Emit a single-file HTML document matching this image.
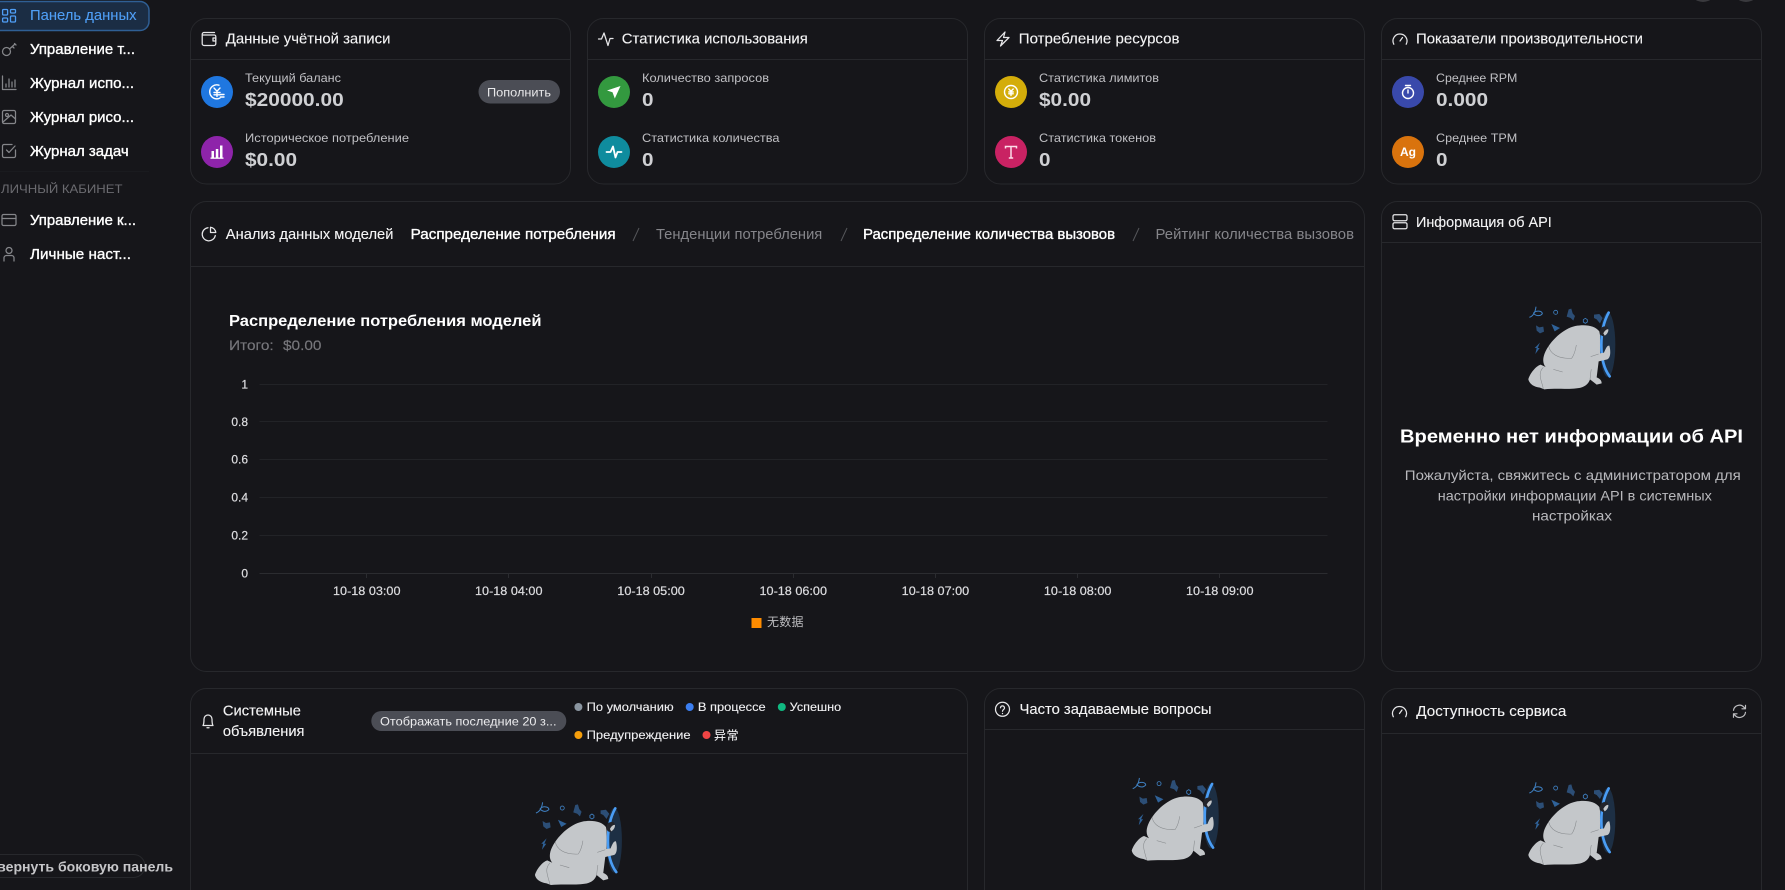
<!DOCTYPE html>
<html lang="ru">
<head>
<meta charset="utf-8">
<title>Панель данных</title>
<style>
html,body{margin:0;padding:0;background:#16161a;width:1785px;height:890px;overflow:hidden}
svg{display:block;position:absolute;left:0;top:0}
text{font-family:"Liberation Sans","Noto Sans CJK SC",sans-serif;}
.card{fill:#16161a;stroke:#27282c;stroke-width:1}
.ln{stroke:#27282c;stroke-width:1}
.nav{font-size:14.5px;fill:#fff;stroke:#fff;stroke-width:.35}
.h{font-size:14.5px;fill:#f4f4f5;stroke:#f4f4f5;stroke-width:.12}
.lb{font-size:12px;fill:#c0c0c4}
.v{font-size:18.5px;font-weight:700;fill:#cfd0d3}
.ic{fill:none;stroke:#e6e6e8;stroke-width:1.25;stroke-linecap:round;stroke-linejoin:round}
.si{fill:none;stroke:#85868a;stroke-width:1.25;stroke-linecap:round;stroke-linejoin:round}
.w{fill:none;stroke:#fff;stroke-width:1.4;stroke-linecap:round;stroke-linejoin:round}
.tb{font-size:14.5px;fill:#fff;stroke:#fff;stroke-width:.35}
.tg{font-size:14.5px;fill:#85858a}
.gr{stroke:#222327;stroke-width:1}
.ax{font-size:12px;fill:#dcdcdf;stroke:#dcdcdf;stroke-width:.2}
.lg{font-size:12px;fill:#f0f0f2;stroke:#f0f0f2;stroke-width:.1}
.b{font-size:14px;fill:#b9b9bd}
</style>
</head>
<body>
<svg width="1785" height="890" viewBox="0 0 1785 890" xmlns="http://www.w3.org/2000/svg">
<defs>
<g id="mascot">
  <ellipse cx="323" cy="164" rx="23" ry="97" fill="#1d2f44"/>
  <path d="M326 68C311 95 304 130 304 165C304 205 313 238 329 259" fill="none" stroke="#4a9df5" stroke-width="8" stroke-linecap="round"/>
  <path d="M88 82C100 78 106 66 108 50M100 70C108 60 126 62 127 71C120 80 108 78 100 70" fill="none" stroke="#3f80c2" stroke-width="3"/>
  <circle cx="167" cy="67" r="6" fill="none" stroke="#3f80c2" stroke-width="2.5"/>
  <path d="M206 58L214 56L218 70L225 78L220 92L212 84L200 80Z" fill="#2c4e76"/>
  <path d="M256 85L262 89V96L256 100L250 96V89Z" fill="none" stroke="#3f80c2" stroke-width="2.5"/>
  <path d="M282 74L298 72L308 84L300 100L290 88L282 84Z" fill="#2c4e76"/>
  <path d="M108 106L118 112L130 110L132 125L120 130L110 122Z" fill="#2c4e76"/>
  <path d="M154 102L180 114L164 124Z" fill="#2f6299"/>
  <path d="M120 158L113 174L119 174L106 192L110 174L104 174Z" fill="#2f6299"/>
  <path d="M298 124C286 108 258 102 226 108C190 116 150 152 134 190C127 208 129 222 137 231L122 224C108 228 90 250 85 268C88 280 98 290 120 293L133 298C170 294 220 300 245 292C258 288 266 280 270 268L290 284L305 280C305 270 298 265 290 262L296 214L322 208C333 204 332 180 328 167C320 165 316 180 312 188L300 190L300 135Z" fill="#c4c7ca"/>
  <path d="M300 128C298 114 308 106 322 110C328 118 324 132 314 138C306 140 302 136 300 128Z" fill="#23242a"/>
  <path d="M310 130C314 122 320 116 325 118C326 126 320 134 314 137Z" fill="#c4c7ca"/>
  <path d="M146 168C150 190 172 207 215 205M229 165C226 185 220 198 215 205M272 200L296 192M160 238L188 246M270 268C272 255 272 245 274 238M130 296C124 270 112 250 130 232" fill="none" stroke="#85888b" stroke-width="1.6"/>
</g>
<g id="gauge"><path d="M-6.2 4.2A7 7 0 1 1 6.2 4.2" class="ic"/><path d="M0 1L2.5-2.5" class="ic"/></g>
</defs>

<rect width="1785" height="890" fill="#16161a"/>

<!-- top-right buttons -->
<circle cx="1703" cy="-12" r="14" fill="#3a3a3e"/>
<circle cx="1746" cy="-12" r="14" fill="#3a3a3e"/>

<!-- Sidebar -->
<rect x="-10" y="1.5" width="159" height="29" rx="9" fill="#1b2d44" stroke="#2f5f94" stroke-width="1.5"/>
<g fill="none" stroke="#4f9ef5" stroke-width="1.3">
  <rect x="2.6" y="9.5" width="5" height="5.5" rx="1"/><rect x="10.5" y="9.5" width="5" height="3.5" rx="1"/>
  <rect x="2.6" y="18" width="5" height="4" rx="1"/><rect x="10.5" y="16" width="5" height="6" rx="1"/>
</g>
<text x="30" y="20" class="nav" style="fill:#4f9ef5;stroke:#4f9ef5;stroke-width:.1" textLength="106.5" lengthAdjust="spacingAndGlyphs">Панель данных</text>

<g class="si" transform="translate(9,49)"><circle cx="-2.5" cy="2.5" r="4"/><path d="M0.5 0L6-5M3.5-2.5L5-1M5.5-5.5L7-4"/></g>
<text x="30" y="54" class="nav" textLength="105" lengthAdjust="spacingAndGlyphs">Управление т...</text>

<g class="si" transform="translate(9,83)"><path d="M-6.5-7V6.5H7M-3 4V1M0 4V-4M3 4V-1M6 4V-3"/></g>
<text x="30" y="88" class="nav" textLength="104" lengthAdjust="spacingAndGlyphs">Журнал испо...</text>

<g class="si" transform="translate(9,117)"><rect x="-6.5" y="-6.5" width="13" height="13" rx="1.5"/><circle cx="-2" cy="-2" r="1.5"/><path d="M-6 5L2-2L6.5 2"/></g>
<text x="30" y="122" class="nav" textLength="104" lengthAdjust="spacingAndGlyphs">Журнал рисо...</text>

<g class="si" transform="translate(9,151)"><path d="M6.5-1V5A1.5 1.5 0 0 1 5 6.5H-5A1.5 1.5 0 0 1-6.5 5V-5A1.5 1.5 0 0 1-5-6.5H3M-2.5-1L0 1.5L6-5"/></g>
<text x="30" y="156" class="nav" textLength="98.7" lengthAdjust="spacingAndGlyphs">Журнал задач</text>

<line x1="0" y1="171.5" x2="149" y2="171.5" stroke="#1a1b1f"/>
<text x="1" y="193" font-size="12" fill="#6b6b70" textLength="121.5" lengthAdjust="spacingAndGlyphs">ЛИЧНЫЙ КАБИНЕТ</text>

<g class="si" transform="translate(9,220)"><rect x="-7" y="-5.5" width="14" height="11" rx="1.5"/><path d="M-7-1.5H7"/></g>
<text x="30" y="225" class="nav" textLength="106" lengthAdjust="spacingAndGlyphs">Управление к...</text>

<g class="si" transform="translate(9,254)"><circle cx="0" cy="-3.5" r="3"/><path d="M-5 7V4A2.5 2.5 0 0 1-2.5 1.5H2.5A2.5 2.5 0 0 1 5 4V7"/></g>
<text x="30" y="259" class="nav" textLength="101" lengthAdjust="spacingAndGlyphs">Личные наст...</text>

<path d="M0 854.5H133.5A11.5 11.5 0 0 1 133.5 877.5H0" fill="none" stroke="#27282c"/>
<text x="-13" y="871.5" font-size="14" font-weight="700" fill="#c6c6c9" textLength="186" lengthAdjust="spacingAndGlyphs">Свернуть боковую панель</text>

<!-- Card 1 -->
<rect class="card" x="190.5" y="18.5" width="380" height="165.5" rx="16"/>
<line class="ln" x1="190.5" y1="59.5" x2="570.5" y2="59.5"/>
<g class="ic" transform="translate(209,39)"><path d="M5.5-6.5H-5A1.8 1.8 0 0 0-6.8-4.7V4.7A1.8 1.8 0 0 0-5 6.5H5A1.8 1.8 0 0 0 6.8 4.7V-2.5A1.5 1.5 0 0 0 5-4H-6"/><path d="M4-1H6.8V2H4Z"/></g>
<text x="225.8" y="43.5" class="h" textLength="164.6" lengthAdjust="spacingAndGlyphs">Данные учётной записи</text>

<circle cx="217" cy="92" r="16" fill="#1f77e0"/>
<g class="w" transform="translate(217,92)"><path d="M2-6.8A7 7 0 1 0 3 6"/><path d="M-3-4L0-.8L3-4M0-.8V4.5M-3 .5H3M-3 2.8H3M3.5 2.5H7M3.5 5H7"/></g>
<text x="245" y="82" class="lb" textLength="96" lengthAdjust="spacingAndGlyphs">Текущий баланс</text>
<text x="245" y="106" class="v" textLength="98.7" lengthAdjust="spacingAndGlyphs">$20000.00</text>
<rect x="478.5" y="80" width="81.5" height="23.5" rx="11.7" fill="#4b4d55"/>
<text x="487" y="96.3" font-size="12" fill="#e8e8ea" textLength="64" lengthAdjust="spacingAndGlyphs">Пополнить</text>

<circle cx="217" cy="152" r="16" fill="#8e24aa"/>
<g transform="translate(217,152)" fill="#fff"><rect x="-5.5" y="-1" width="2.5" height="6.5"/><rect x="-1.2" y="-3" width="2.5" height="8.5"/><rect x="3" y="-6.5" width="2.5" height="12"/><rect x="-6.5" y="5.5" width="13" height="1.3"/></g>
<text x="245" y="142" class="lb" textLength="164" lengthAdjust="spacingAndGlyphs">Историческое потребление</text>
<text x="245" y="166" class="v" textLength="52" lengthAdjust="spacingAndGlyphs">$0.00</text>

<!-- Card 2 -->
<rect class="card" x="587.5" y="18.5" width="380" height="165.5" rx="16"/>
<line class="ln" x1="587.5" y1="59.5" x2="967.5" y2="59.5"/>
<path class="ic" transform="translate(606,39)" d="M-7.5 0H-4.5L-2-6L2 6.5L4-.5H7"/>
<text x="621.8" y="43.5" class="h" textLength="186" lengthAdjust="spacingAndGlyphs">Статистика использования</text>

<circle cx="614" cy="92" r="16" fill="#33993f"/>
<path transform="translate(614,92)" d="M6.5-6L-7-1.5L-1.5.3L.8 6.5Z" fill="#fff"/>
<text x="642" y="82" class="lb" textLength="127" lengthAdjust="spacingAndGlyphs">Количество запросов</text>
<text x="642" y="106" class="v" textLength="11.5" lengthAdjust="spacingAndGlyphs">0</text>

<circle cx="614" cy="152" r="16" fill="#0f8c9e"/>
<path transform="translate(614,152)" d="M-7.5 0H-3.5L-1-5.5L1.5 5.5L3.5 0H7.5" fill="none" stroke="#fff" stroke-width="1.8" stroke-linecap="round" stroke-linejoin="round"/>
<text x="642" y="142" class="lb" textLength="137.5" lengthAdjust="spacingAndGlyphs">Статистика количества</text>
<text x="642" y="166" class="v" textLength="11.5" lengthAdjust="spacingAndGlyphs">0</text>

<!-- Card 3 -->
<rect class="card" x="984.5" y="18.5" width="380" height="165.5" rx="16"/>
<line class="ln" x1="984.5" y1="59.5" x2="1364.5" y2="59.5"/>
<path class="ic" transform="translate(1003,39)" d="M2-7L-6 1.5H-.5L-2.5 7L6-1.5H.5Z"/>
<text x="1018.8" y="43.5" class="h" textLength="160.7" lengthAdjust="spacingAndGlyphs">Потребление ресурсов</text>

<circle cx="1011" cy="92" r="16" fill="#d4ad0a"/>
<g class="w" transform="translate(1011,92)"><circle r="6.5"/><path d="M-2.2-3L0-.8L2.2-3M0-.8V3.5M-2.2 0H2.2M-2.2 1.8H2.2"/></g>
<text x="1039" y="82" class="lb" textLength="120" lengthAdjust="spacingAndGlyphs">Статистика лимитов</text>
<text x="1039" y="106" class="v" textLength="52" lengthAdjust="spacingAndGlyphs">$0.00</text>

<circle cx="1011" cy="152" r="16" fill="#c92263"/>
<path transform="translate(1011,152)" d="M-5.5-3.5V-5.5H5.5V-3.5M0-5.5V6M-2.2 6H2.2" fill="none" stroke="#fcdde9" stroke-width="1.5"/>
<text x="1039" y="142" class="lb" textLength="117" lengthAdjust="spacingAndGlyphs">Статистика токенов</text>
<text x="1039" y="166" class="v" textLength="11.5" lengthAdjust="spacingAndGlyphs">0</text>

<!-- Card 4 -->
<rect class="card" x="1381.5" y="18.5" width="380" height="165.5" rx="16"/>
<line class="ln" x1="1381.5" y1="59.5" x2="1761.5" y2="59.5"/>
<use href="#gauge" transform="translate(1400,40)"/>
<text x="1416" y="43.5" class="h" textLength="227" lengthAdjust="spacingAndGlyphs">Показатели производительности</text>

<circle cx="1408" cy="92" r="16" fill="#3949ab"/>
<g class="w" transform="translate(1408,92)"><circle cy="1" r="5.5"/><path d="M-2.5-6.5H2.5M0 1V-2"/></g>
<text x="1436" y="82" class="lb" textLength="81.3" lengthAdjust="spacingAndGlyphs">Среднее RPM</text>
<text x="1436" y="106" class="v" textLength="52" lengthAdjust="spacingAndGlyphs">0.000</text>

<circle cx="1408" cy="152" r="16" fill="#d9730d"/>
<text x="1408" y="156" font-size="12" font-weight="700" fill="#fff" text-anchor="middle">Ag</text>
<text x="1436" y="142" class="lb" textLength="81.3" lengthAdjust="spacingAndGlyphs">Среднее TPM</text>
<text x="1436" y="166" class="v" textLength="11.5" lengthAdjust="spacingAndGlyphs">0</text>

<!-- Chart card -->
<rect class="card" x="190.5" y="201.5" width="1174" height="470" rx="16"/>
<line class="ln" x1="190.5" y1="266.5" x2="1364.5" y2="266.5"/>
<g class="ic" transform="translate(209,234)"><path d="M-1-6.3A6.6 6.6 0 1 0 6.3 1.5"/><path d="M1.5-6.8A6 6 0 0 1 6.8-1.5H1.5Z"/></g>
<text x="225.8" y="239" class="h" textLength="167.6" lengthAdjust="spacingAndGlyphs">Анализ данных моделей</text>
<text x="410.6" y="239" class="tb" textLength="205" lengthAdjust="spacingAndGlyphs">Распределение потребления</text>
<path d="M639 228L633 241" stroke="#55565a"/>
<text x="656" y="239" class="tg" textLength="166.3" lengthAdjust="spacingAndGlyphs">Тенденции потребления</text>
<path d="M847 228L841 241" stroke="#55565a"/>
<text x="863" y="239" class="tb" textLength="252" lengthAdjust="spacingAndGlyphs">Распределение количества вызовов</text>
<path d="M1139 228L1133 241" stroke="#55565a"/>
<text x="1155.5" y="239" class="tg" textLength="198.5" lengthAdjust="spacingAndGlyphs">Рейтинг количества вызовов</text>

<text x="229" y="326" font-size="16" font-weight="700" fill="#fff" textLength="312.5" lengthAdjust="spacingAndGlyphs">Распределение потребления моделей</text>
<text x="229" y="350" font-size="14" fill="#77777c" stroke="#77777c" stroke-width=".15" textLength="44.7" lengthAdjust="spacingAndGlyphs">Итого:</text>
<text x="283" y="350" font-size="14" fill="#77777c" stroke="#77777c" stroke-width=".15" textLength="38.5" lengthAdjust="spacingAndGlyphs">$0.00</text>

<line class="gr" x1="259.5" y1="384.5" x2="1327.5" y2="384.5"/>
<line class="gr" x1="259.5" y1="421.5" x2="1327.5" y2="421.5"/>
<line class="gr" x1="259.5" y1="459.5" x2="1327.5" y2="459.5"/>
<line class="gr" x1="259.5" y1="497.5" x2="1327.5" y2="497.5"/>
<line class="gr" x1="259.5" y1="535.5" x2="1327.5" y2="535.5"/>
<line x1="259.5" y1="573.5" x2="1327.5" y2="573.5" stroke="#2b2c30"/>
<g stroke="#2b2c30"><path d="M366.5 573V578M508.5 573V578M651.5 573V578M793.5 573V578M935.5 573V578M1077.5 573V578M1219.5 573V578"/></g>

<g class="ax" text-anchor="end">
<text x="248" y="388.5">1</text>
<text x="248" y="426">0.8</text>
<text x="248" y="463.5">0.6</text>
<text x="248" y="501.5">0.4</text>
<text x="248" y="539.5">0.2</text>
<text x="248" y="577.5">0</text>
</g>
<g class="ax">
<text x="333" y="595" textLength="67.5" lengthAdjust="spacingAndGlyphs">10-18 03:00</text>
<text x="475" y="595" textLength="67.5" lengthAdjust="spacingAndGlyphs">10-18 04:00</text>
<text x="617.3" y="595" textLength="67.5" lengthAdjust="spacingAndGlyphs">10-18 05:00</text>
<text x="759.5" y="595" textLength="67.5" lengthAdjust="spacingAndGlyphs">10-18 06:00</text>
<text x="901.7" y="595" textLength="67.5" lengthAdjust="spacingAndGlyphs">10-18 07:00</text>
<text x="1043.9" y="595" textLength="67.5" lengthAdjust="spacingAndGlyphs">10-18 08:00</text>
<text x="1186" y="595" textLength="67.5" lengthAdjust="spacingAndGlyphs">10-18 09:00</text>
</g>
<rect x="751.5" y="618" width="10" height="10" fill="#ff8c00"/>
<text x="767" y="626" font-size="12" fill="#bdbdc0" textLength="36.5">无数据</text>

<!-- API card -->
<rect class="card" x="1381.5" y="201.5" width="380" height="470" rx="16"/>
<line class="ln" x1="1381.5" y1="242.5" x2="1761.5" y2="242.5"/>
<g class="ic" transform="translate(1400,221.7)"><rect x="-7" y="-7" width="14" height="6" rx="1.5"/><rect x="-7" y="1" width="14" height="6" rx="1.5"/></g>
<text x="1416" y="227" class="h" textLength="135.7" lengthAdjust="spacingAndGlyphs">Информация об API</text>
<use href="#mascot" transform="translate(1500,290) scale(.3333)"/>
<text x="1400" y="442.5" font-size="18" font-weight="700" fill="#fff" textLength="343" lengthAdjust="spacingAndGlyphs">Временно нет информации об API</text>
<text x="1404.8" y="480" class="b" textLength="336" lengthAdjust="spacingAndGlyphs">Пожалуйста, свяжитесь с администратором для</text>
<text x="1437.8" y="500.5" class="b" textLength="274" lengthAdjust="spacingAndGlyphs">настройки информации API в системных</text>
<text x="1532" y="520.5" class="b" textLength="80" lengthAdjust="spacingAndGlyphs">настройках</text>

<!-- Announcements -->
<path class="card" d="M190.5 890V704.5A16 16 0 0 1 206.5 688.5H951.5A16 16 0 0 1 967.5 704.5V890"/>
<line class="ln" x1="190.5" y1="753.5" x2="967.5" y2="753.5"/>
<g class="ic" transform="translate(208,721)"><path d="M-5 4.5C-4 3-4-1-4-2A4 4 0 0 1 4-2C4-1 4 3 5 4.5Z"/><path d="M-1 6.8H1"/></g>
<text x="222.9" y="715.5" class="h" textLength="78" lengthAdjust="spacingAndGlyphs">Системные</text>
<text x="222.9" y="736" class="h" textLength="81.6" lengthAdjust="spacingAndGlyphs">объявления</text>
<rect x="371.3" y="711" width="195" height="20" rx="10" fill="#4b4d55"/>
<text x="380" y="725.3" font-size="12" fill="#ececee" textLength="176.5" lengthAdjust="spacingAndGlyphs">Отображать последние 20 з...</text>
<circle cx="578.4" cy="707" r="4" fill="#8a95a0"/>
<text x="586.6" y="711" class="lg" textLength="87" lengthAdjust="spacingAndGlyphs">По умолчанию</text>
<circle cx="689.7" cy="707" r="4" fill="#3b7ef0"/>
<text x="697.9" y="711" class="lg" textLength="67.8" lengthAdjust="spacingAndGlyphs">В процессе</text>
<circle cx="781.8" cy="707" r="4" fill="#10b981"/>
<text x="789.7" y="711" class="lg" textLength="51.5" lengthAdjust="spacingAndGlyphs">Успешно</text>
<circle cx="578.4" cy="735" r="4" fill="#f59e0b"/>
<text x="586.6" y="739" class="lg" textLength="104" lengthAdjust="spacingAndGlyphs">Предупреждение</text>
<circle cx="706.5" cy="735" r="4" fill="#ef4444"/>
<text x="714" y="739.5" class="lg" textLength="24.5">异常</text>
<use href="#mascot" transform="translate(506.6,785.7) scale(.3333)"/>

<!-- FAQ -->
<path class="card" d="M984.5 890V704.5A16 16 0 0 1 1000.5 688.5H1348.5A16 16 0 0 1 1364.5 704.5V890"/>
<line class="ln" x1="984.5" y1="729.5" x2="1364.5" y2="729.5"/>
<g class="ic" transform="translate(1002.5,709.3)"><circle r="7"/><path d="M-2-1.5A2 2 0 1 1 1 .3C.3.8 0 1 0 2"/><path d="M0 4.2V4.3"/></g>
<text x="1019.5" y="714" class="h" textLength="192" lengthAdjust="spacingAndGlyphs">Часто задаваемые вопросы</text>
<use href="#mascot" transform="translate(1103.4,761.3) scale(.3333)"/>

<!-- Service -->
<path class="card" d="M1381.5 890V704.5A16 16 0 0 1 1397.5 688.5H1745.5A16 16 0 0 1 1761.5 704.5V890"/>
<line class="ln" x1="1381.5" y1="733.5" x2="1761.5" y2="733.5"/>
<use href="#gauge" transform="translate(1399.5,712.5)"/>
<text x="1416.3" y="716" class="h" textLength="150" lengthAdjust="spacingAndGlyphs">Доступность сервиса</text>
<g transform="translate(1739.5,711.3)" fill="none" stroke="#bdbdc0" stroke-width="1.2" stroke-linecap="round" stroke-linejoin="round"><path d="M-6-1A6 6 0 0 1 4.5-4L6-2.5M6-6V-2.5H2.5"/><path d="M6 1A6 6 0 0 1-4.5 4L-6 2.5M-6 6V2.5H-2.5"/></g>
<use href="#mascot" transform="translate(1500,765.7) scale(.3333)"/>
</svg>
</body>
</html>
